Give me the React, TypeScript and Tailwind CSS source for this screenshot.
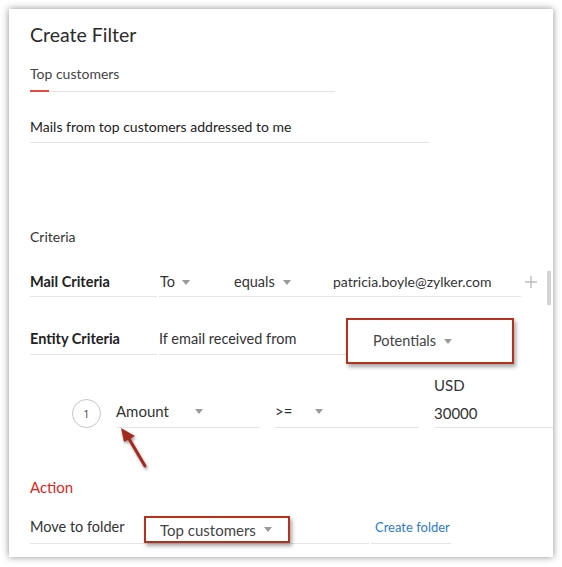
import React from 'react';

const Caret = ({ className = '' }: { className?: string }) => (
  <svg width="8" height="5" viewBox="0 0 8 5" className={className}>
    <path d="M0 0 L8 0 L4 5 Z" fill="#9a9a9a" />
  </svg>
);

export default function App() {
  return (
    <div className="w-[562px] h-[567px] bg-white overflow-hidden" style={{ fontFamily: 'Lato, "Open Sans", sans-serif' }}>
      <div className="relative mt-[9px] ml-[9px] w-[544px] h-[548px] bg-white shadow-[0_0_7px_rgba(0,0,0,0.45)] pt-[12px] pl-[21px] text-[#333]">
        {/* Titulo */}
        <h1 className="text-[19.5px] leading-[27px] text-[#2b2b2b]">Create Filter</h1>

        {/* Nombre del filtro */}
        <div className="relative mt-[16px] w-[305px] pb-[7px] border-b border-[#e4e4e4] text-[14px] leading-[20px] text-[#444]">
          Top customers
          <span className="absolute left-0 bottom-[-1px] w-[19px] h-[2px] bg-[#e24b43]" />
        </div>

        {/* Descripcion */}
        <div className="mt-[25px] w-[399px] pb-[5px] border-b border-[#e4e4e4] text-[14px] leading-[20px] text-[#222]">
          Mails from top customers addressed to me
        </div>

        <div className="mt-[84px] text-[14px] leading-[20px] text-[#333]">Criteria</div>

        {/* Mail Criteria */}
        <div className="mt-[25px] flex items-end text-[14.5px] leading-[20px]">
          <div className="w-[127px] pb-[4px] border-b border-[#e4e4e4] font-bold text-[#222]">Mail Criteria</div>
          <div className="ml-[2px] w-[362px] pb-[4px] border-b border-[#e4e4e4] flex items-center text-[#333]">
            <div className="w-[75px] pl-[1px] flex items-center gap-[7px]">
              To <Caret />
            </div>
            <div className="w-[99px] flex items-center gap-[8px]">
              equals <Caret />
            </div>
            <div className="text-[14px]">patricia.boyle@zylker.com</div>
          </div>
          <svg className="ml-[4px] mb-[9px]" width="12" height="12" viewBox="0 0 12 12">
            <path d="M6 0 V12 M0 6 H12" stroke="#bdbdbd" strokeWidth="1.4" />
          </svg>
        </div>
        <div className="absolute right-[2px] top-[262px] w-[4px] h-[34px] bg-[#d4d4d4]" />

        {/* Entity Criteria */}
        <div className="relative mt-[32px] flex items-end text-[14.5px] leading-[20px]">
          <div className="w-[127px] pb-[5px] border-b border-[#e4e4e4] font-bold text-[#222]">Entity Criteria</div>
          <div className="ml-[2px] w-[188px] pb-[5px] border-b border-[#e4e4e4] text-[#333]">If email received from</div>
          <div className="absolute left-[316px] top-[-11px] w-[168px] h-[46px] border-2 border-[#b3321f] shadow-[2px_3px_4px_rgba(0,0,0,0.35)] flex items-center pl-[25px] gap-[8px] text-[#444]">
            Potentials <Caret />
          </div>
        </div>

        {/* Condicion */}
        <div className="relative mt-[20px] flex items-end text-[15px] leading-[20px] text-[#333]">
          <div className="ml-[42px] w-[29px] h-[29px] rounded-full border border-[#c4c4c4] flex items-center justify-center text-[11px] text-[#444]" style={{ fontFamily: '"Open Sans", sans-serif' }}>
            1
          </div>
          <div className="ml-[15px] w-[144px] pb-[6px] border-b border-[#e4e4e4] flex items-center">
            <span className="w-[79px]">Amount</span>
            <Caret />
          </div>
          <div className="ml-[15px] w-[144px] pb-[6px] border-b border-[#e4e4e4] flex items-center">
            <span className="w-[40px]">&gt;=</span>
            <Caret />
          </div>
          <div className="ml-[15px] flex-1 pb-[4px] border-b border-[#e4e4e4] flex flex-col">
            <span>USD</span>
            <span className="mt-[8px]">30000</span>
          </div>
          <svg className="absolute left-[88px] top-[52px]" width="40" height="50" viewBox="0 0 40 50" style={{ filter: 'drop-shadow(1px 2px 1.5px rgba(0,0,0,0.4))' }}>
            <line x1="27" y1="39" x2="10" y2="10" stroke="#a52a1e" strokeWidth="3" strokeLinecap="round" />
            <path d="M3 1 L17 9 L6 15 Z" fill="#a52a1e" />
          </svg>
        </div>

        <div className="mt-[49px] text-[15px] leading-[20px] text-[#e0251b]">Action</div>

        {/* Mover a carpeta */}
        <div className="mt-[20px] flex items-end text-[14.5px] leading-[20px]">
          <div className="relative w-[339px] pb-[6px] border-b border-[#e4e4e4] text-[#333]">
            Move to folder
            <div className="absolute left-[114px] top-[-1px] w-[146px] h-[27px] border-2 border-[#b3321f] shadow-[2px_3px_4px_rgba(0,0,0,0.35)] flex items-center pl-[14px] gap-[8px] text-[#444] text-[15px]">
              Top customers <Caret />
            </div>
          </div>
          <div className="ml-[2px] w-[80px] pl-[4px] pb-[6px] border-b border-[#e4e4e4] text-[13px] text-[#2d7bd8]">Create folder</div>
        </div>
      </div>
    </div>
  );
}
